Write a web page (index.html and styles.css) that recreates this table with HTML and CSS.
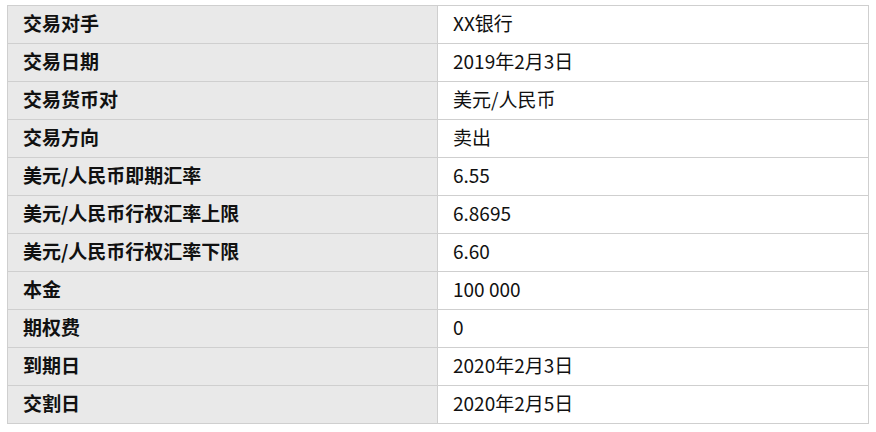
FILE: index.html
```html
<!DOCTYPE html>
<html lang="zh-CN">
<head>
<meta charset="utf-8">
<link rel="stylesheet" href="styles.css">
</head>
<body>
<table class="info">
<tbody>
<tr><th>交易对手</th><td>XX银行</td></tr>
<tr><th>交易日期</th><td>2019年2月3日</td></tr>
<tr><th>交易货币对</th><td>美元/人民币</td></tr>
<tr><th>交易方向</th><td>卖出</td></tr>
<tr><th>美元/人民币即期汇率</th><td>6.55</td></tr>
<tr><th>美元/人民币行权汇率上限</th><td>6.8695</td></tr>
<tr><th>美元/人民币行权汇率下限</th><td>6.60</td></tr>
<tr><th>本金</th><td>100 000</td></tr>
<tr><th>期权费</th><td>0</td></tr>
<tr><th>到期日</th><td>2020年2月3日</td></tr>
<tr><th>交割日</th><td>2020年2月5日</td></tr>
</tbody>
</table>
</body>
</html>
```

FILE: styles.css
```css
body {
  margin: 5px 7px;
  background: #ffffff;
  font-family: "Noto Sans CJK SC", "Noto Sans", sans-serif;
  font-size: 19px;
  color: #111111;
}
.info {
  border-collapse: collapse;
  width: 862px;
  table-layout: fixed;
}
.info th,
.info td {
  border: 1px solid #cfcfcf;
  height: 38px;
  padding: 0 15px 3px;
  box-sizing: border-box;
  text-align: left;
  vertical-align: middle;
  line-height: 22px;
}
.info th {
  width: 430px;
  background: #e9e9e9;
  font-weight: bold;
}
.info td {
  background: #ffffff;
  font-weight: normal;
}
```
